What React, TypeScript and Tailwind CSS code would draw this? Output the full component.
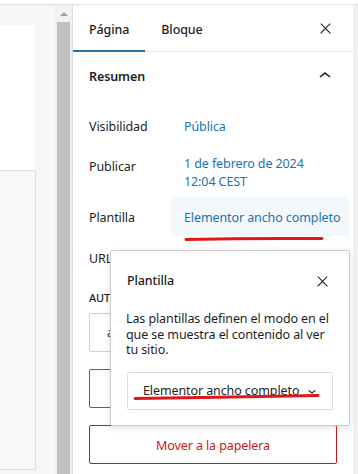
import React from "react";

const CloseIcon = () => (
  <svg width="17" height="17" viewBox="0 0 24 24" fill="#1e1e1e">
    <path d="M13 11.8l6.1-6.3-1-1-6.1 6.2-6.1-6.2-1 1 6.1 6.3-6.5 6.7 1 1 6.5-6.6 6.5 6.6 1-1z" />
  </svg>
);

const ChevronUp = () => (
  <svg width="24" height="24" viewBox="0 0 24 24" fill="#1e1e1e">
    <path d="M6.5 12.4L12 8l5.5 4.4-.9 1.2L12 10l-4.5 3.6-1-1.2z" />
  </svg>
);

const ChevronDown = () => (
  <svg width="16" height="16" viewBox="0 0 24 24" fill="#1e1e1e">
    <path d="M17.5 11.6L12 16l-5.5-4.4.9-1.2L12 14l4.5-3.6 1 1.2z" />
  </svg>
);

export default function App() {
  return (
    <div
      className="relative w-[358px] h-[474px] overflow-hidden bg-white flex flex-col text-[12.5px] tracking-[-0.1px] text-[#1e1e1e]"
      style={{ fontFamily: '"Noto Sans", "Open Sans", sans-serif' }}
    >
      <div className="h-[5px] shrink-0 bg-white border-b border-[#e0e0e0]" />
      <div className="flex flex-1 min-h-0">
        {/* left canvas */}
        <div className="w-[55px] shrink-0 bg-[#f6f6f6] flex flex-col">
          <div className="h-[20px] shrink-0" />
          <div className="w-[35px] h-[145px] shrink-0 bg-white" />
          <div className="w-[36px] flex-1 mb-[4px] bg-[#f8f8f8] border-t border-r border-b border-[#dddddd]" />
        </div>
        {/* scrollbar */}
        <div className="w-[17px] shrink-0 bg-[#f1f1f1] flex flex-col items-center">
          <div className="mt-[7px] w-0 h-0 border-l-[4px] border-r-[4px] border-b-[4px] border-l-transparent border-r-transparent border-b-[#a3a3a3]" />
          <div className="mt-[6px] w-[13px] flex-1 bg-[#c1c1c1]" />
        </div>
        <div className="w-px shrink-0 bg-[#dcdcdc]" />
        {/* sidebar */}
        <div className="w-[280px] shrink-0 flex flex-col">
          <div className="flex items-start h-[47px] border-b border-[#e0e0e0] shrink-0">
            <div className="h-[47px] px-4 pt-[5px] flex items-center font-medium border-b-2 border-[#2271b1]">
              Página
            </div>
            <div className="h-[46px] px-4 pt-[5px] flex items-center font-medium">Bloque</div>
            <div className="ml-auto mr-[16px] h-[46px] w-6 flex items-center justify-center">
              <CloseIcon />
            </div>
          </div>
          <div className="h-[48px] px-4 pt-[3px] flex items-center justify-between shrink-0">
            <span className="font-semibold">Resumen</span>
            <span className="-mt-[3px] flex">
              <ChevronUp />
            </span>
          </div>
          <div className="pl-4 pr-4 flex flex-col">
            <div className="mt-[8px] h-[36px] pt-[2px] flex items-center">
              <span className="w-[95px] shrink-0">Visibilidad</span>
              <span className="text-[#2271b1]">Pública</span>
            </div>
            <div className="mt-[10px] h-[37px] pt-[1px] flex items-start">
              <span className="w-[95px] shrink-0 pt-[3px] leading-[18px]">Publicar</span>
              <span className="text-[#2271b1] leading-[18px]">
                1 de febrero de 2024
                <br />
                12:04 CEST
              </span>
            </div>
            <div className="mt-[6px] h-[39px] flex items-center">
              <span className="w-[82px] shrink-0 pt-[3px]">Plantilla</span>
              <div className="w-[179px] shrink-0 h-[39px] pl-[13px] pt-[3px] flex items-center bg-[#f3f8fc] text-[#2271b1] rounded-[2px]">
                Elementor ancho completo
              </div>
            </div>
            <div className="mt-[4px] h-[36px] pt-[2px] flex items-center">
              <span className="w-[95px] shrink-0">URL</span>
            </div>
            <div className="mt-[15px] leading-[14px] text-[11px] font-medium uppercase">Autor</div>
            <div className="mt-[8px] h-[39px] w-[248px] border border-[#cfcfcf] rounded-[2px] flex items-center pl-[17px] pt-[2px]">
              a
            </div>
            <div className="mt-[17px] h-[39px] w-[248px] border border-[#2271b1] rounded-[2px]" />
            <div className="mt-[17px] h-[39px] w-[248px] border border-[#cc1818] rounded-[2px] flex items-center justify-center pt-[3px] text-[#cc1818]">
              Mover a la papelera
            </div>
          </div>
        </div>
        <div className="flex-1 bg-[#f0f0f0]" />
      </div>

      {/* popover */}
      <div className="absolute left-[110px] top-[250px] w-[240px] h-[176px] bg-white border border-[#cccccc] rounded-[2px] shadow-[0_2px_6px_rgba(0,0,0,0.12)] px-4 pt-4 flex flex-col">
        <div className="h-[28px] flex items-center justify-between">
          <span className="font-medium">Plantilla</span>
          <div className="w-6 h-6 flex items-center justify-center mr-[-1px]">
            <CloseIcon />
          </div>
        </div>
        <p className="mt-[16px] leading-[15.5px] -ml-px">
          Las plantillas definen el modo en el
          <br />
          que se muestra el contenido al ver
          <br />
          tu sitio.
        </p>
        <div className="mt-[14px] h-[38px] border border-[#dddddd] rounded-[2px] flex items-center pl-[15px] pr-[12px]">
          <span className="pt-[1px]">Elementor ancho completo</span>
          <span className="ml-auto flex items-center">
            <ChevronDown />
          </span>
        </div>
      </div>

      {/* red annotations */}
      <svg className="absolute left-0 top-0 pointer-events-none" width="358" height="474">
        <path d="M186 239.5 C 230 238.5, 290 238.3, 322 238.6" stroke="#e0161b" strokeWidth="3" strokeLinecap="round" fill="none" />
        <path d="M135 398.5 C 190 397.5, 270 396.8, 318 395.5" stroke="#e0161b" strokeWidth="3" strokeLinecap="round" fill="none" />
      </svg>
    </div>
  );
}
